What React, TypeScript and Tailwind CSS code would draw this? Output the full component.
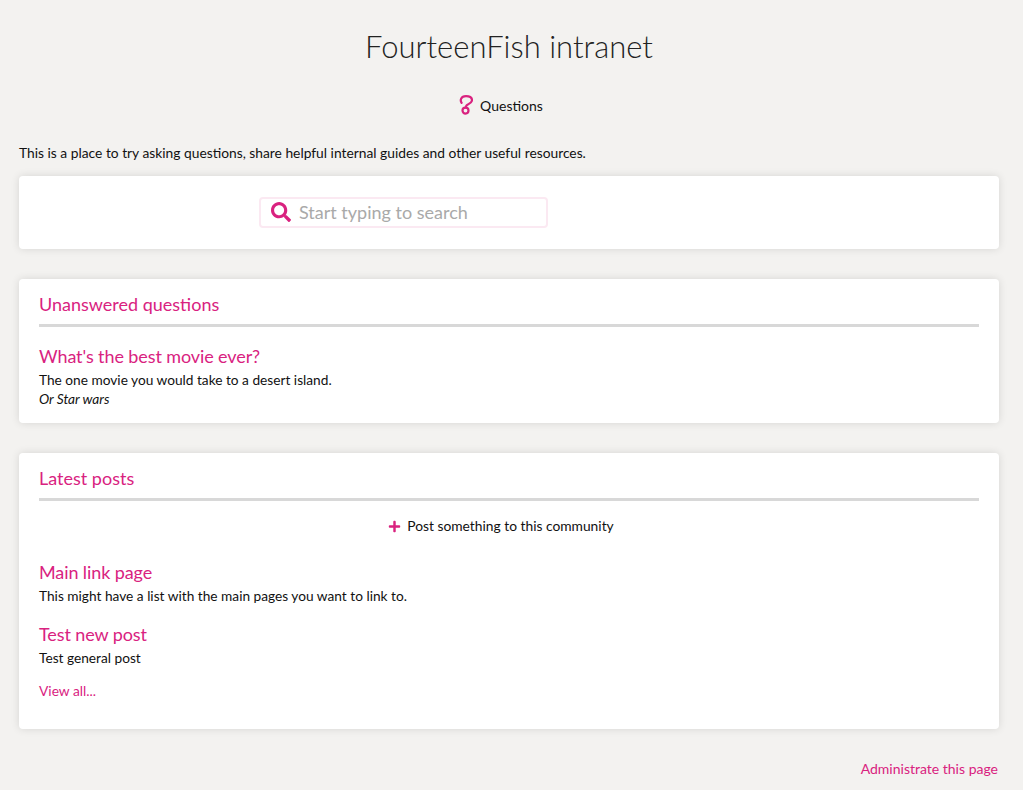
import { FaPlus, FaSearch } from "react-icons/fa";

const pink = "text-[#d9227f]";

function Card({ title, children }: { title: string; children: React.ReactNode }) {
  return (
    <section className="bg-white rounded mb-[30px] px-5 shadow-[0_0_8px_rgba(0,0,0,0.12)]">
      <h2 className={`text-[18px] leading-[22px] pt-[14px] pb-[9px] border-b-[3px] border-[#d8d8d8] ${pink}`}>{title}</h2>
      {children}
    </section>
  );
}

function Post({ title, className, children }: { title: string; className?: string; children: React.ReactNode }) {
  return (
    <div className={className}>
      <h3 className={`text-[18px] leading-[22px] tracking-[-0.1px] ${pink}`}>{title}</h3>
      <div className="text-[13.7px] leading-[19px] mt-[3px]">{children}</div>
    </div>
  );
}

export default function App() {
  return (
    <div className="min-h-[790px] bg-[#f3f2f0] text-[#111] pl-[19px] pr-[24px] pt-[26px] font-['Lato','Open_Sans',sans-serif] overflow-hidden">
      <h1 className="text-[31px] leading-[40px] font-light text-center text-[#222]">FourteenFish intranet</h1>

      <nav className="flex justify-center items-center gap-[7px] mt-[27px] h-[24px] pr-[16px] text-[14px]">
        <svg width="14" height="20" viewBox="0 0 14 20" fill="none" stroke="#d9227f" strokeWidth="2.2" strokeLinecap="round" strokeLinejoin="round">
          <path d="M2.6 7.8 C1 5.5 1.6 1.2 7 1.2 C11 1.2 13 3 13 5.2 C13 8 9 9 7.5 10.5 L6.6 12.4" />
          <circle cx="6.5" cy="15.6" r="3" />
        </svg>
        <span>Questions</span>
      </nav>

      <p className="text-[13.8px] leading-[19px] mt-[26px]">
        This is a place to try asking questions, share helpful internal guides and other useful resources.
      </p>

      <section className="bg-white rounded mt-[14px] mb-[30px] h-[73px] flex items-center pl-[240px] shadow-[0_0_8px_rgba(0,0,0,0.12)]">
        <div className="w-[289px] h-[31px] mt-[-1px] border-2 border-[#fbe9f2] rounded flex items-center pl-[10px] gap-[8px]">
          <FaSearch size={20} className={pink} />
          <span className="text-[18px] mt-[1px] text-[#a9a9a9]">Start typing to search</span>
        </div>
      </section>

      <Card title="Unanswered questions">
        <Post title="What's the best movie ever?" className="pt-[18px] pb-[15px]">
          <p>The one movie you would take to a desert island.</p>
          <p className="italic">Or Star wars</p>
        </Post>
      </Card>

      <Card title="Latest posts">
        <div className="flex justify-center items-center gap-[6px] h-[24px] mt-[13px] pr-[16px] text-[13.8px]">
          <FaPlus size={13} className={pink} />
          <span>Post something to this community</span>
        </div>
        <Post title="Main link page" className="mt-[23px]">
          <p>This might have a list with the main pages you want to link to.</p>
        </Post>
        <Post title="Test new post" className="mt-[18px]">
          <p>Test general post</p>
        </Post>
        <a className={`block text-[13.8px] leading-[19px] mt-[14px] pb-[29px] ${pink}`}>View all...</a>
      </Card>

      <a className={`block text-right text-[14px] leading-[19px] pr-[1px] ${pink}`}>Administrate this page</a>
    </div>
  );
}
